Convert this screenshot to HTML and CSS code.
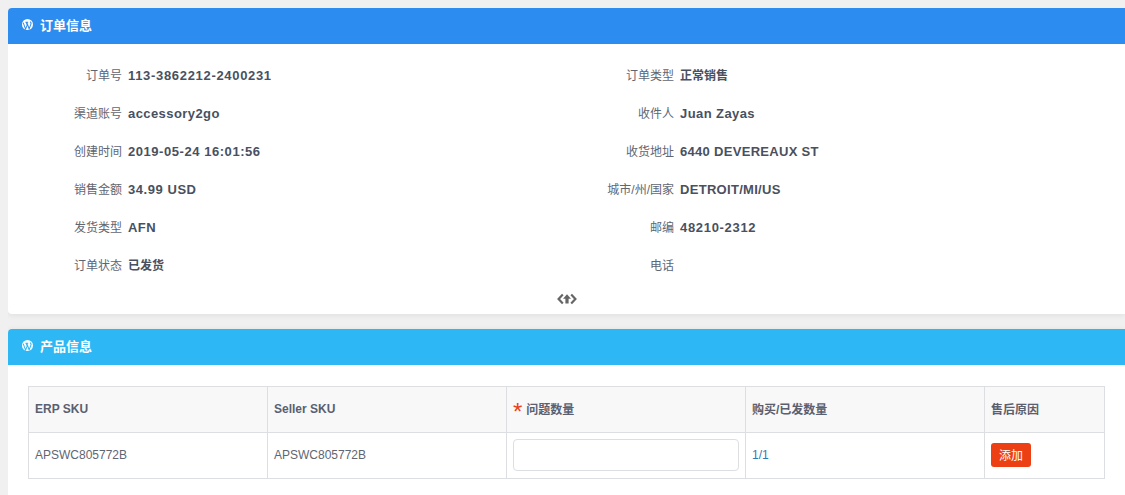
FILE: index.html
```html
<!DOCTYPE html>
<html lang="zh-CN">
<head>
<meta charset="utf-8">
<title>订单信息</title>
<link rel="stylesheet" href="styles.css">
</head>
<body>
<section class="card">
  <header class="card-head head-blue">
    <svg class="wp" viewBox="0 0 12 12"><circle cx="6" cy="6" r="6" fill="#fff"/><path d="M1.3 4 3.9 11 5.7 6.6 4.6 3.6M3.7 3.5H6.8M5.2 3.5 7.8 10.8 9.7 5.6C10.2 4.2 9.4 3.3 8.7 3" fill="none" stroke="#2d8cf0" stroke-width="1.1"/></svg>
    <h2>订单信息</h2>
  </header>
  <div class="info">
    <div class="row"><span class="label">订单号</span><b class="value num">113-3862212-2400231</b></div>
    <div class="row"><span class="label">订单类型</span><b class="value cjk">正常销售</b></div>
    <div class="row"><span class="label">渠道账号</span><b class="value">accessory2go</b></div>
    <div class="row"><span class="label">收件人</span><b class="value">Juan Zayas</b></div>
    <div class="row"><span class="label">创建时间</span><b class="value date">2019-05-24 16:01:56</b></div>
    <div class="row"><span class="label">收货地址</span><b class="value caps">6440 DEVEREAUX ST</b></div>
    <div class="row"><span class="label">销售金额</span><b class="value date">34.99 USD</b></div>
    <div class="row"><span class="label">城市/州/国家</span><b class="value caps">DETROIT/MI/US</b></div>
    <div class="row"><span class="label">发货类型</span><b class="value">AFN</b></div>
    <div class="row"><span class="label">邮编</span><b class="value num">48210-2312</b></div>
    <div class="row"><span class="label">订单状态</span><b class="value cjk">已发货</b></div>
    <div class="row"><span class="label">电话</span><b class="value"></b></div>
  </div>
  <div class="toggle">
    <svg viewBox="0 0 20 12" width="20" height="12"><path d="M5.8 1.6 1.6 6 5.8 10.4M14.2 1.6 18.4 6 14.2 10.4" fill="none" stroke="#666" stroke-width="2.2"/><path d="M10 1.2 14 5.8H11.6V10.6H8.4V5.8H6Z" fill="#666"/></svg>
  </div>
</section>
<section class="card card-product">
  <header class="card-head head-sky">
    <svg class="wp" viewBox="0 0 12 12"><circle cx="6" cy="6" r="6" fill="#fff"/><path d="M1.3 4 3.9 11 5.7 6.6 4.6 3.6M3.7 3.5H6.8M5.2 3.5 7.8 10.8 9.7 5.6C10.2 4.2 9.4 3.3 8.7 3" fill="none" stroke="#2db7f5" stroke-width="1.1"/></svg>
    <h2>产品信息</h2>
  </header>
  <div class="table-wrap">
    <table>
      <colgroup><col class="c"><col class="c"><col class="c"><col class="c"><col></colgroup>
      <thead>
        <tr><th>ERP SKU</th><th>Seller SKU</th><th><span class="req">*</span>问题数量</th><th>购买/已发数量</th><th>售后原因</th></tr>
      </thead>
      <tbody>
        <tr>
          <td>APSWC805772B</td>
          <td>APSWC805772B</td>
          <td><input class="qty" type="text"></td>
          <td class="link">1/1</td>
          <td><button class="add" type="button">添加</button></td>
        </tr>
      </tbody>
    </table>
  </div>
</section>
</body>
</html>
```
FILE: styles.css
```css
html { overflow: hidden; }
body {
  margin: 8px 0 0 8px;
  background: #f0f0f0;
  color: #495060;
  font-family: "Liberation Sans", "Noto Sans CJK SC", sans-serif;
  font-size: 12px;
}
.card {
  background: #fff;
  border-radius: 4px 0 0 4px;
  box-shadow: 0 1px 6px rgba(0, 0, 0, .08);
}
.card-product { margin-top: 15px; padding-bottom: 21px; }
.card-head {
  box-sizing: border-box;
  display: flex;
  align-items: center;
  height: 36px;
  padding: 0 0 4px 14px;
  border-radius: 4px 0 0 0;
  color: #fff;
}
.head-blue { background: #2d8cf0; }
.head-sky { background: #2db7f5; }
.wp { width: 11px; height: 11px; margin-right: 7px; }
.card-head h2 { margin: 0; font-size: 13px; font-weight: 700; }
.info {
  display: grid;
  grid-template-columns: 552px 1fr;
  grid-auto-rows: 38px;
  padding-top: 12px;
}
.row { display: flex; align-items: center; }
.label { width: 114px; margin-bottom: 2px; text-align: right; color: #5f6672; }
.value { margin-left: 6px; font-size: 13px; letter-spacing: .42px; color: #495060; }
.value.num { letter-spacing: .68px; }
.value.date { letter-spacing: .55px; }
.value.caps { letter-spacing: .3px; }
.value.cjk { margin-bottom: 2px; font-size: 12px; letter-spacing: 0; }
.toggle {
  display: flex;
  justify-content: center;
  align-items: center;
  height: 30px;
}
.table-wrap { padding: 21px 20px 0; }
table {
  width: 1077px;
  table-layout: fixed;
  border-collapse: collapse;
}
.c { width: 239px; }
th, td {
  box-sizing: border-box;
  border: 1px solid #dddee1;
  padding: 0 6px 2px;
  height: 46px;
  text-align: left;
  font-size: 12px;
}
th { background: #f8f8f9; font-weight: 700; color: #5a6070; }
td { color: #5f6672; }
.req { color: #ed3f14; font-size: 24px; font-weight: 400; line-height: 0; margin-right: 4px; vertical-align: -6px; }
.qty {
  display: block;
  box-sizing: border-box;
  width: 226px;
  height: 32px;
  border: 1px solid #dddee1;
  border-radius: 4px;
  background: #fff;
}
td.link { color: #2d7ab8; }
.add {
  display: block;
  width: 40px;
  height: 24px;
  padding: 0;
  border: 0;
  border-radius: 3px;
  background: #ed3f14;
  color: #fff;
  font: inherit;
}
```
